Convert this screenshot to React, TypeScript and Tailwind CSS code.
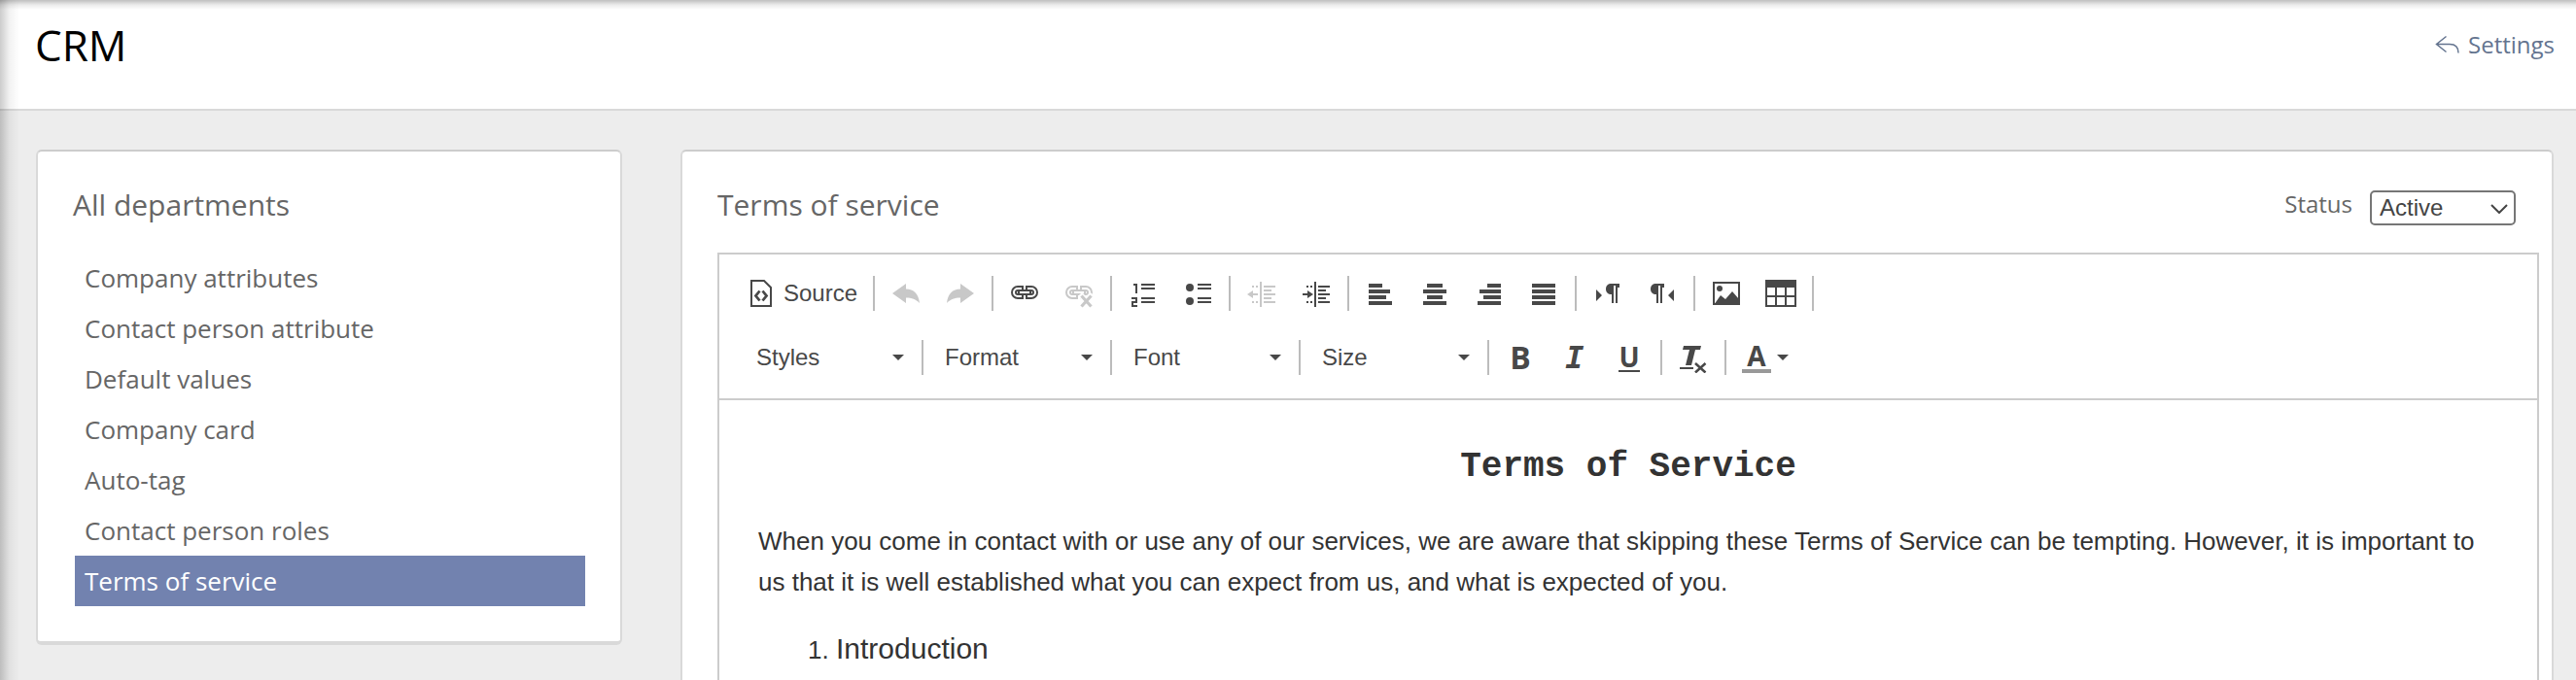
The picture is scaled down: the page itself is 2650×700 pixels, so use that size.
import { useState } from 'react';
import type { ReactNode } from 'react';

const departments = [
  'Company attributes',
  'Contact person attribute',
  'Default values',
  'Company card',
  'Auto-tag',
  'Contact person roles',
  'Terms of service',
];

function Icon({ children }: { children: ReactNode }) {
  return (
    <svg viewBox="0 0 32 32" width="32" height="32" fill="currentColor" aria-hidden="true" className="shrink-0">
      {children}
    </svg>
  );
}

function Bars({ rows }: { rows: number[][] }) {
  return (
    <Icon>
      {rows.map(([x, y, w, h]) => (
        <rect key={`${x}-${y}`} x={x} y={y} width={w} height={h} />
      ))}
    </Icon>
  );
}

const chain = (
  <g fill="none">
    <path d="M15 11H9a4 4 0 0 0 0 8h6M17 11h6a4 4 0 0 1 0 8h-6" stroke="currentColor" strokeWidth="6" />
    <path d="M13 11H9a4 4 0 0 0 0 8h4M19 11h4a4 4 0 0 1 0 8h-4" stroke="#fff" strokeWidth="2" />
    <path d="M9 15h14" stroke="currentColor" strokeWidth="6" />
    <path d="M11 15h10" stroke="#fff" strokeWidth="2" />
  </g>
);

const icons = {
  source: (
    <Icon>
      <path d="M7 3h13l7 7v19H7z" fill="none" stroke="currentColor" strokeWidth="2" />
      <path d="M15.500 13.500l-4 5 4 5M18.500 13.500l4 5-4 5" fill="none" stroke="currentColor" strokeWidth="2.800" />
    </Icon>
  ),
  undo: (
    <Icon>
      <path d="M2 16 16 6v5.500c8 0 13 5 14 14.500-4-4-8-5.500-14-5.500V26z" />
    </Icon>
  ),
  redo: (
    <Icon>
      <path d="M30 16 16 6v5.500C8 11.500 3 16.500 2 26c4-4 8-5.500 14-5.500V26z" />
    </Icon>
  ),
  link: <Icon>{chain}</Icon>,
  unlink: (
    <Icon>
      {chain}
      <path d="M17 17 30 31M30 17 17 31" stroke="#fff" strokeWidth="6" />
      <path d="M18.500 18.500 28.500 29.500M28.500 18.500 18.500 29.500" stroke="currentColor" strokeWidth="3.200" />
    </Icon>
  ),
  numbered: (
    <Icon>
      <path d="M6 6h4v10H8V8H6zM4 20h6v6H6v2h4v2H4v-6h4v-2H4z" />
      <path d="M14 6h14v2H14zM14 10h14v2H14zM14 20h14v2H14zM14 24h14v2H14z" />
    </Icon>
  ),
  bulleted: (
    <Icon>
      <circle cx="8" cy="10" r="4" />
      <circle cx="8" cy="24" r="4" />
      <path d="M16 6h14v2H16zM16 10h14v2H16zM16 20h14v2H16zM16 24h14v2H16z" />
    </Icon>
  ),
  outdent: (
    <Icon>
      <path d="M14 4h2v26h-2zM18 8h12v2H18zM18 12h8v2h-8zM18 16h12v2H18zM18 20h8v2h-8zM18 24h12v2H18zM6 8h2v2H6zM10 8h2v2h-2zM6 24h2v2H6zM10 24h2v2h-2zM6 16h6v2H6z" />
      <path d="M1 17l6-4v8z" />
    </Icon>
  ),
  indent: (
    <Icon>
      <path d="M14 4h2v26h-2zM18 8h12v2H18zM18 12h8v2h-8zM18 16h12v2H18zM18 20h8v2h-8zM18 24h12v2H18zM6 8h2v2H6zM10 8h2v2h-2zM6 24h2v2H6zM10 24h2v2h-2zM2 16h6v2H2z" />
      <path d="M13 17l-6-4v8z" />
    </Icon>
  ),
  left: <Bars rows={[[4, 6, 14, 4], [4, 12, 22, 4], [4, 18, 18, 4], [4, 24, 24, 4]]} />,
  center: <Bars rows={[[8, 6, 16, 4], [4, 12, 24, 4], [8, 18, 16, 4], [4, 24, 24, 4]]} />,
  right: <Bars rows={[[14, 6, 14, 4], [6, 12, 22, 4], [10, 18, 18, 4], [4, 24, 24, 4]]} />,
  justify: <Bars rows={[[4, 6, 24, 4], [4, 12, 24, 4], [4, 18, 24, 4], [4, 24, 24, 4]]} />,
  ltr: (
    <Icon>
      <path d="M4 12l6 6-6 6zM28 6v4h-2v16h-2V8h-2v18h-2v-9c-4 0-6-2-6-5.500S16 6 20 6z" />
    </Icon>
  ),
  rtl: (
    <Icon>
      <path d="M28 12l-6 6 6 6zM18 6v4h-2v16h-2V8h-2v18h-2v-9c-4 0-6-2-6-5.500S6 6 10 6z" />
    </Icon>
  ),
  image: (
    <Icon>
      <path d="M3 5h26v22H3z" fill="none" stroke="currentColor" strokeWidth="2" />
      <circle cx="9" cy="11" r="3" />
      <path d="M3 28l7-10 5 4 7-8 7 8v6z" />
    </Icon>
  ),
  table: (
    <Icon>
      <path d="M0 2h32v28H0zM2 10v8h8v-8zM12 10v8h8v-8zM22 10v8h8v-8zM2 20v8h8v-8zM12 20v8h8v-8zM22 20v8h8v-8z" fillRule="evenodd" />
    </Icon>
  ),
  removeFormat: (
    <Icon>
      <path d="M6 4h18l-1 4h-5l-4 16H8l4-16H5zM2 26h14v2H2z" />
      <path d="M18 22 28.500 31.500M28.500 22 18 31.500" stroke="currentColor" strokeWidth="2.500" />
    </Icon>
  ),
};

function Separator() {
  return <span className="mx-1 h-9 w-0.5 shrink-0 bg-[#bcbcbc]" />;
}

function ToolButton({ label, disabled, children }: { label: string; disabled?: boolean; children: ReactNode }) {
  return (
    <button
      type="button"
      aria-label={label}
      disabled={disabled}
      className="flex h-14 w-14 items-center justify-center text-[#484848] disabled:text-[#c8c8c8]"
    >
      {children}
    </button>
  );
}

function Caret() {
  return (
    <svg viewBox="0 0 12 6" width="12" height="6" fill="currentColor" aria-hidden="true">
      <path d="M0 0h12L6 6z" />
    </svg>
  );
}

function Combo({ label }: { label: string }) {
  return (
    <button type="button" className="flex h-14 w-[184px] items-center justify-between pr-3.5 pl-[18px] text-2xl text-[#484848]">
      {label}
      <Caret />
    </button>
  );
}

function Toolbar() {
  return (
    <div role="toolbar" className="flex flex-col gap-2.5 border-b-2 border-[#cccccc] px-3.5 pt-3 pb-3.5">
      <div className="flex flex-wrap items-center">
        <button type="button" className="flex h-14 items-center gap-2 px-3 text-2xl text-[#484848]">
          {icons.source}
          Source
        </button>
        <Separator />
        <ToolButton label="Undo" disabled>{icons.undo}</ToolButton>
        <ToolButton label="Redo" disabled>{icons.redo}</ToolButton>
        <Separator />
        <ToolButton label="Link">{icons.link}</ToolButton>
        <ToolButton label="Unlink" disabled>{icons.unlink}</ToolButton>
        <Separator />
        <ToolButton label="Numbered list">{icons.numbered}</ToolButton>
        <ToolButton label="Bulleted list">{icons.bulleted}</ToolButton>
        <Separator />
        <ToolButton label="Decrease indent" disabled>{icons.outdent}</ToolButton>
        <ToolButton label="Increase indent">{icons.indent}</ToolButton>
        <Separator />
        <ToolButton label="Align left">{icons.left}</ToolButton>
        <ToolButton label="Center">{icons.center}</ToolButton>
        <ToolButton label="Align right">{icons.right}</ToolButton>
        <ToolButton label="Justify">{icons.justify}</ToolButton>
        <Separator />
        <ToolButton label="Text direction left to right">{icons.ltr}</ToolButton>
        <ToolButton label="Text direction right to left">{icons.rtl}</ToolButton>
        <Separator />
        <ToolButton label="Image">{icons.image}</ToolButton>
        <ToolButton label="Table">{icons.table}</ToolButton>
        <Separator />
      </div>
      <div className="flex flex-wrap items-center pl-1.5">
        <Combo label="Styles" />
        <Separator />
        <Combo label="Format" />
        <Separator />
        <Combo label="Font" />
        <Separator />
        <Combo label="Size" />
        <Separator />
        <ToolButton label="Bold">
          <span className="font-['Open_Sans'] text-[32px] leading-8 font-bold">B</span>
        </ToolButton>
        <ToolButton label="Italic">
          <span className="font-['DejaVu_Sans_Mono'] text-[32px] leading-8 font-bold italic">I</span>
        </ToolButton>
        <ToolButton label="Underline">
          <span className="border-b-2 border-current font-['Open_Sans'] text-[28px] leading-7 font-bold">U</span>
        </ToolButton>
        <Separator />
        <ToolButton label="Remove format">{icons.removeFormat}</ToolButton>
        <Separator />
        <button type="button" aria-label="Text color" className="flex h-14 items-center gap-1.5 px-3 text-[#484848]">
          <span className="w-[30px] border-b-4 border-[#999999] text-center font-['Open_Sans'] text-[28px] leading-7 font-bold">A</span>
          <Caret />
        </button>
      </div>
    </div>
  );
}

export default function App() {
  const [active, setActive] = useState('Terms of service');
  const [status, setStatus] = useState('Active');

  return (
    <div className="relative h-screen overflow-hidden bg-[#ededed] font-['Open_Sans',sans-serif] text-[#666666]">
      <header className="flex h-[114px] items-start justify-between border-b-2 border-[#d9d9d9] bg-white pt-4 pr-[22px] pl-9">
        <h1 className="text-[44px] leading-[60px] text-black">CRM</h1>
        <a href="#settings" className="flex items-center gap-2 pt-3 text-2xl leading-9 text-[#64748f]">
          <svg viewBox="0 0 26 20" width="26" height="20" fill="none" stroke="currentColor" strokeWidth="1.500" aria-hidden="true">
            <path d="M11.500 1.500 1.500 9.500l10 8M1.500 9.500H15c6 0 9 3 9 9" />
          </svg>
          Settings
        </a>
      </header>

      <main className="flex items-start gap-[60px] pt-10 pr-[23px] pl-[37px]">
        <aside className="w-[603px] shrink-0 rounded-md border-2 border-b-4 border-[#d9d9d9] border-t-[#cccccc] bg-white px-9 pt-[35px] pb-9">
          <h2 className="text-[30px] leading-10">All departments</h2>
          <nav className="pt-[29px] pl-0.5">
            <ul>
              {departments.map((name) => (
                <li key={name}>
                  <a
                    href="#department"
                    onClick={() => setActive(name)}
                    className={
                      name === active
                        ? 'block bg-[#7282af] px-2.5 text-[26px] leading-[52px] text-white'
                        : 'block px-2.5 text-[26px] leading-[52px]'
                    }
                  >
                    {name}
                  </a>
                </li>
              ))}
            </ul>
          </nav>
        </aside>

        <section className="min-w-0 flex-1 rounded-md border-2 border-b-4 border-[#d9d9d9] border-t-[#cccccc] bg-white pt-[35px] pr-[13px] pb-9 pl-9">
          <div className="flex items-start justify-between pr-6 pb-7">
            <h2 className="text-[30px] leading-10">Terms of service</h2>
            <div className="flex items-start gap-[18px] pt-[5px]">
              <label htmlFor="status" className="text-2xl leading-7">
                Status
              </label>
              <span className="relative flex">
                <select
                  id="status"
                  value={status}
                  onChange={(event) => setStatus(event.target.value)}
                  className="h-9 w-[150px] appearance-none rounded-[5px] border-2 border-[#767676] bg-white pl-2 font-['Liberation_Sans'] text-2xl leading-8 text-[#444444]"
                >
                  <option>Active</option>
                  <option>Inactive</option>
                </select>
                <svg
                  viewBox="0 0 18 10"
                  width="18"
                  height="10"
                  fill="none"
                  stroke="#444444"
                  strokeWidth="2"
                  aria-hidden="true"
                  className="pointer-events-none absolute top-3.5 right-2"
                >
                  <path d="M1 1l8 8 8-8" />
                </svg>
              </span>
            </div>
          </div>

          <div className="border-2 border-[#cccccc] font-['Liberation_Sans',sans-serif]">
            <Toolbar />
            <article className="min-h-[400px] p-10 text-[26px] leading-[42px] text-[#333333]">
              <h3 className="text-center font-['Liberation_Mono',monospace] text-4xl leading-[58px] font-bold">Terms of Service</h3>
              <p className="pt-[26px]">
                When you come in contact with or use any of our services, we are aware that skipping these Terms of Service can be tempting. However, it
                is important to us that it is well established what you can expect from us, and what is expected of you.
              </p>
              <ol className="list-decimal pt-6 pl-20">
                <li>
                  <span className="text-[30px] leading-[48px]">Introduction</span>
                </li>
              </ol>
            </article>
          </div>
        </section>
      </main>

      <div className="pointer-events-none absolute inset-y-0 left-0 w-5 bg-linear-to-r from-black/20 via-black/5 to-transparent" />
      <div className="pointer-events-none absolute inset-x-0 top-0 h-2.5 bg-linear-to-b from-black/25 via-black/8 to-transparent" />
    </div>
  );
}
